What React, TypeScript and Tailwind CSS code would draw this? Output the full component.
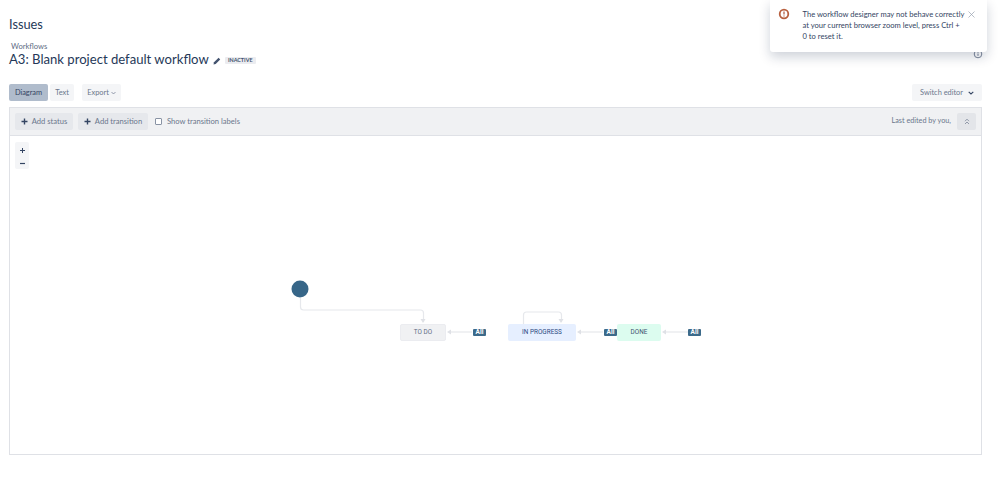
import React from "react";

function Arrow({ d }: { d: string }) {
  return <path d={d} fill="none" stroke="#e6e8ec" strokeWidth="1.2" />;
}

function Head({ x, y, dir }: { x: number; y: number; dir: "down" | "left" }) {
  const pts = dir === "down" ? `${x - 2.5},${y - 4} ${x + 2.5},${y - 4} ${x},${y}` : `${x},${y} ${x + 4},${y - 2.5} ${x + 4},${y + 2.5}`;
  return <polygon points={pts} fill="#dfe1e6" />;
}

function AllTag({ className }: { className: string }) {
  return (
    <div className={`absolute h-[7px] w-[13px] rounded-[1px] bg-[#3c6a8a] text-white font-['Roboto',sans-serif] text-[6.5px] leading-[7px] font-bold text-center ${className}`}>
      All
    </div>
  );
}

function Status({ className, label }: { className: string; label: string }) {
  return (
    <div className={`absolute h-[17px] pt-[1px] rounded-[2px] flex items-center justify-center font-['Roboto',sans-serif] text-[6.4px] font-normal ${className}`}>
      {label}
    </div>
  );
}

function Btn({ className = "", children }: { className?: string; children: React.ReactNode }) {
  return (
    <div className={`h-[17px] rounded-[2px] flex items-center justify-center text-[7.4px] text-[#6b778c] ${className}`}>
      {children}
    </div>
  );
}

function Plus() {
  return (
    <svg width="7" height="7" viewBox="0 0 7 7" className="mr-[4px]">
      <path d="M3.5 .5v6M.5 3.5h6" stroke="#344563" strokeWidth="1.4" />
    </svg>
  );
}

export default function App() {
  return (
    <div className="relative w-[999px] h-[487px] overflow-hidden bg-white pl-[9px] pr-[17px] font-['Lato','Roboto',sans-serif] text-[#172b4d]">
      <div className="pt-[16px] text-[12.8px] leading-[16px] text-[#253858]">Issues</div>
      <div className="mt-[10px] pl-[2px] text-[7.6px] leading-[9px] text-[#5e6c84]">Workflows</div>
      <div className="flex items-center h-[15px] mt-[1px]">
        <span className="text-[13.1px] leading-[15px] text-[#253858]">A3: Blank project default workflow</span>
        <svg width="8" height="8" viewBox="0 0 8 8" className="ml-[4px] mt-[2px]">
          <path d="M.5 7.5l.5-2.2L5.6.8l1.6 1.6L2.7 7z" fill="#42526e" />
        </svg>
        <span className="ml-[4px] mt-[2px] h-[7px] w-[31px] text-center bg-[#ebecf0] rounded-[1px] text-[5.4px] leading-[7px] font-bold text-[#42526e]">INACTIVE</span>
      </div>

      <div className="mt-[17px] flex items-center justify-between">
        <div className="flex items-center">
          <Btn className="w-[39px] bg-[#b0bccc] !text-[#344563]">Diagram</Btn>
          <Btn className="w-[24px] ml-[2px] bg-[#f4f5f7]">Text</Btn>
          <Btn className="w-[39px] ml-[8px] bg-[#f4f5f7]">
            Export
            <svg width="5" height="4" viewBox="0 0 5 4" className="ml-[2px]">
              <path d="M.5 1l2 2 2-2" fill="none" stroke="#6b778c" strokeWidth=".7" />
            </svg>
          </Btn>
        </div>
        <Btn className="w-[70px] bg-[#f4f5f7]">
          Switch editor
          <svg width="6" height="4" viewBox="0 0 6 4" className="ml-[5px]">
            <path d="M.7 .8L3 3l2.3-2.2" fill="none" stroke="#344563" strokeWidth="1.1" />
          </svg>
        </Btn>
      </div>

      <div className="mt-[6px] h-[348px] border border-[#dfe1e6] relative">
        <div className="h-[28px] bg-[#f0f1f3] border-b border-[#dfe1e6] flex items-center pl-[5px] pr-[5px]">
          <Btn className="w-[58px] bg-[#e6e8ec] text-[7.6px]"><Plus />Add status</Btn>
          <Btn className="w-[70px] ml-[5px] bg-[#e6e8ec] text-[7.6px]"><Plus />Add transition</Btn>
          <div className="ml-[7px] w-[7px] h-[7px] border border-[#8993a4] rounded-[1px] bg-white" />
          <div className="ml-[5px] text-[7.6px] text-[#6b778c]">Show transition labels</div>
          <div className="ml-auto text-[7.25px] text-[#6b778c]">Last edited by you,</div>
          <Btn className="w-[19px] ml-[6px] bg-[#e3e5e9]">
            <svg width="6" height="7" viewBox="0 0 6 7">
              <path d="M1 3.2L3 1.2l2 2M1 6L3 4l2 2" fill="none" stroke="#6b778c" strokeWidth=".7" />
            </svg>
          </Btn>
        </div>
        <div className="absolute left-[5px] top-[34px] w-[14px] h-[27px] pt-[2px] bg-[#f4f5f7] rounded-[2px] flex flex-col items-center justify-center gap-[8px]">
          <svg width="5" height="5" viewBox="0 0 5 5"><path d="M2.5 0v5M0 2.5h5" stroke="#344563" strokeWidth="1" /></svg>
          <svg width="5" height="5" viewBox="0 0 5 5"><path d="M0 2.5h5" stroke="#344563" strokeWidth="1.2" /></svg>
        </div>
      </div>

      {/* Workflow diagram */}
      <svg width="999" height="487" viewBox="0 0 999 487" className="absolute left-0 top-0 pointer-events-none">
        <circle cx="300" cy="289" r="8.5" fill="#376688" />
        <Arrow d="M300.5 298v9q0 3 3 3h117q3 0 3 3v9" />
        <Head x={423} y={323} dir="down" />
        <Arrow d="M451 332h21" />
        <Head x={447} y={332} dir="left" />
        <Arrow d="M523.5 324v-9q0-3 3-3h32q3 0 3 3v7" />
        <Head x={561} y={323} dir="down" />
        <Arrow d="M581 332h22" />
        <Head x={577} y={332} dir="left" />
        <Arrow d="M666 332h22" />
        <Head x={662} y={332} dir="left" />
      </svg>
      <Status className="left-[400px] top-[324px] w-[46px] bg-[#f0f1f3] border border-[#ebecf0] text-[#5e6c84]" label="TO DO" />
      <Status className="left-[508px] top-[324px] w-[68px] bg-[#e6efff] text-[#2a4a7f]" label="IN PROGRESS" />
      <Status className="left-[617px] top-[324px] w-[44px] bg-[#dcfcef] text-[#42526e]" label="DONE" />
      <AllTag className="left-[473px] top-[329px]" />
      <AllTag className="left-[604px] top-[329px]" />
      <AllTag className="left-[688px] top-[329px]" />

      {/* Help icon peeking out below the flag */}
      <svg width="10" height="10" viewBox="0 0 10 10" className="absolute left-[973px] top-[49px]">
        <circle cx="5" cy="5" r="3.8" fill="none" stroke="#6b778c" strokeWidth=".9" />
        <path d="M5 4.5v2.4M5 3v.8" stroke="#6b778c" strokeWidth=".9" />
      </svg>

      {/* Flag */}
      <div className="absolute left-[770px] top-0 w-[217px] h-[52px] bg-white rounded-b-[3px] shadow-[0_5px_12px_rgba(9,30,66,0.2)]">
        <svg width="12" height="12" viewBox="0 0 12 12" className="absolute left-[8px] top-[8px]">
          <circle cx="6" cy="6" r="5.2" fill="#b8603f" />
          <circle cx="6" cy="6" r="3.4" fill="#fff" />
          <path d="M6 3.6v2.8M6 7.4v1" stroke="#a8452a" strokeWidth="1.1" />
        </svg>
        <div className="absolute left-[32.5px] top-[9px] w-[176px] text-[7.6px] leading-[11px] text-[#344563]">
          The workflow designer may not behave correctly
          <br />
          at your current browser zoom level, press Ctrl +
          <br />
          0 to reset it.
        </div>
        <svg width="7" height="7" viewBox="0 0 7 7" className="absolute left-[198px] top-[11px]">
          <path d="M.5 .5l6 6M6.5 .5l-6 6" stroke="#97a0af" strokeWidth=".7" />
        </svg>
      </div>
    </div>
  );
}
